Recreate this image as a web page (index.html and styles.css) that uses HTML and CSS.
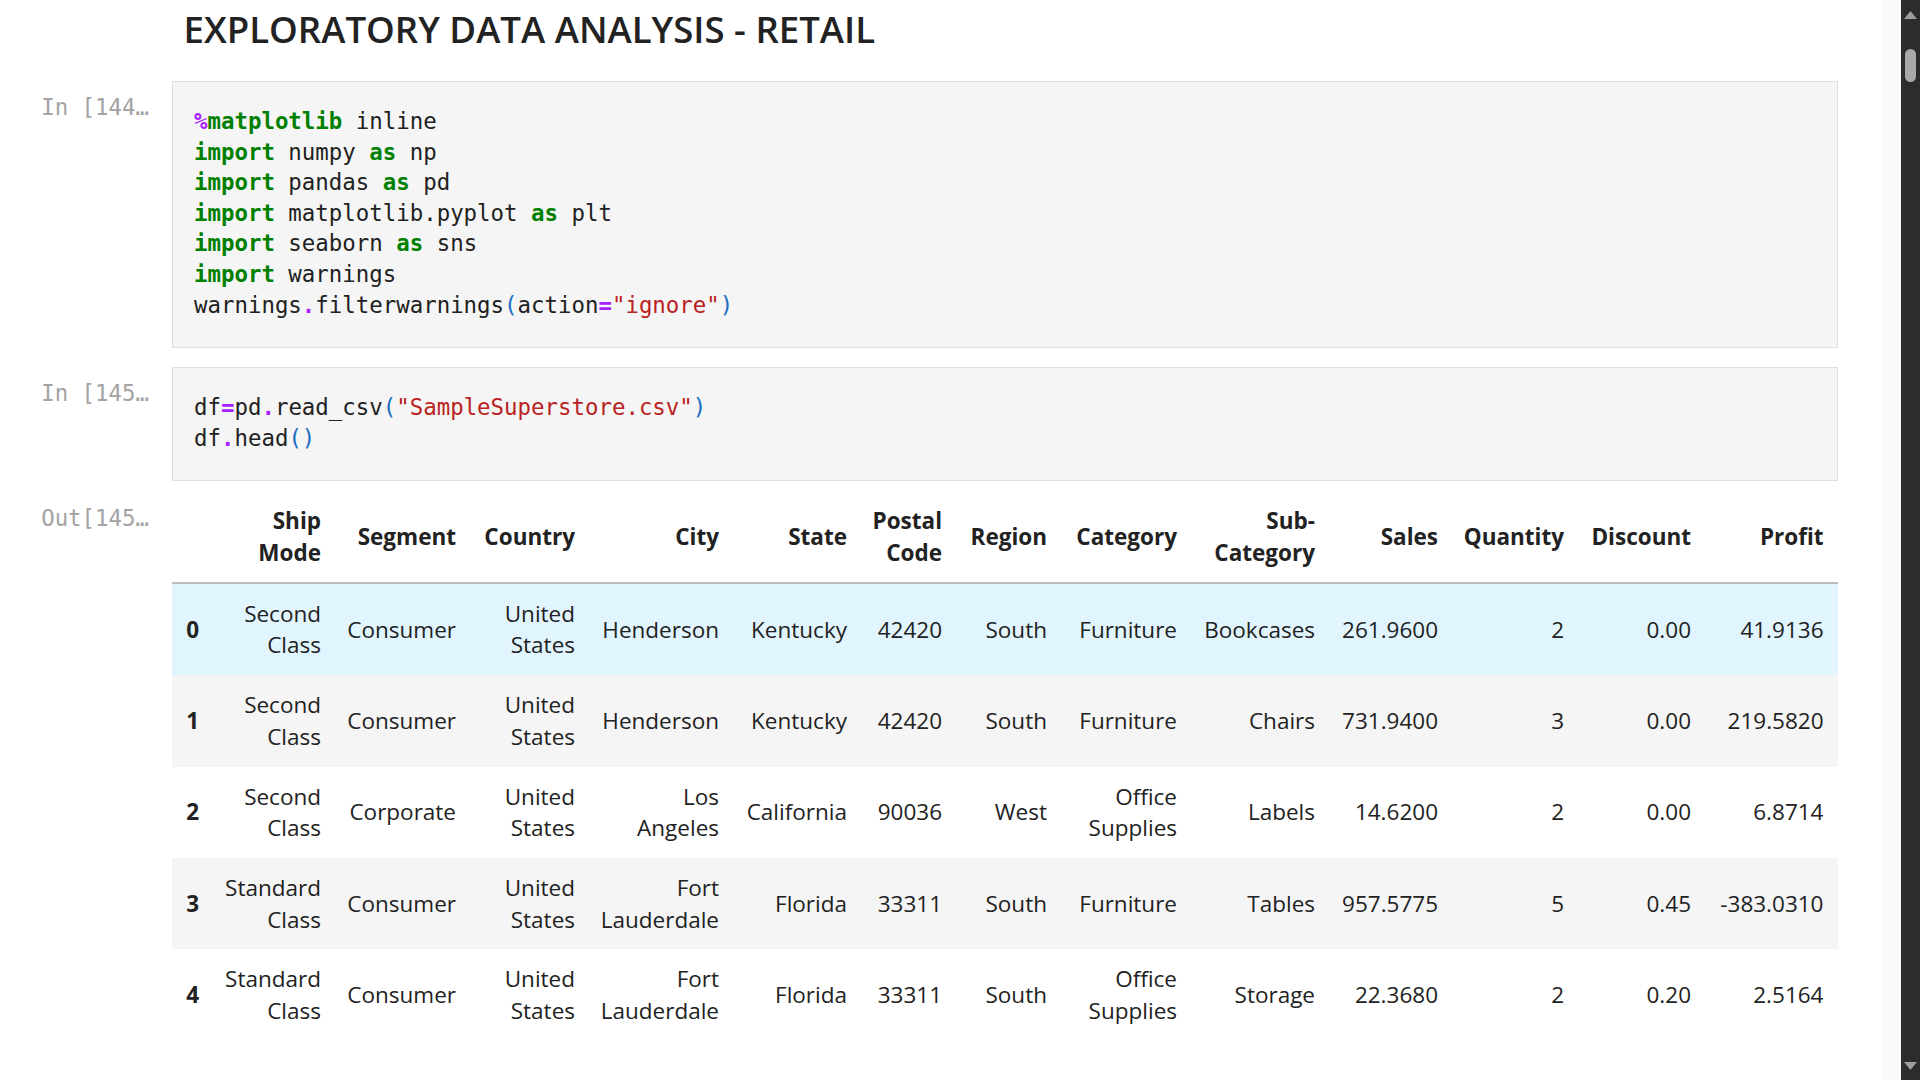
FILE: index.html
```html
<!DOCTYPE html>
<html lang="en">
<head>
<meta charset="utf-8">
<title>EDA - Retail</title>
<link rel="stylesheet" href="styles.css">
</head>
<body>
<div class="app">
  <main class="notebook">
    <section class="cell md-cell">
      <div class="prompt"></div>
      <h1 class="title">EXPLORATORY DATA ANALYSIS - RETAIL</h1>
    </section>

    <section class="cell code-cell first-code">
      <div class="prompt">In [144…</div>
      <pre class="editor"><span class="op">%</span><span class="kw">matplotlib</span> inline
<span class="kw">import</span> numpy <span class="kw">as</span> np
<span class="kw">import</span> pandas <span class="kw">as</span> pd
<span class="kw">import</span> matplotlib.pyplot <span class="kw">as</span> plt
<span class="kw">import</span> seaborn <span class="kw">as</span> sns
<span class="kw">import</span> warnings
warnings<span class="op">.</span>filterwarnings<span class="br">(</span>action<span class="op">=</span><span class="st">"ignore"</span><span class="br">)</span></pre>
    </section>

    <section class="cell code-cell second-code">
      <div class="prompt">In [145…</div>
      <pre class="editor">df<span class="op">=</span>pd<span class="op">.</span>read_csv<span class="br">(</span><span class="st">"SampleSuperstore.csv"</span><span class="br">)</span>
df<span class="op">.</span>head<span class="br">()</span></pre>
    </section>

    <section class="cell output-cell">
      <div class="prompt out-prompt">Out[145…</div>
      <div class="output">
        <table class="dataframe">
          <colgroup>
            <col class="c-idx"><col class="c-ship"><col class="c-seg"><col class="c-country"><col class="c-city"><col class="c-state"><col class="c-postal"><col class="c-region"><col class="c-cat"><col class="c-sub"><col class="c-sales"><col class="c-qty"><col class="c-disc"><col class="c-profit">
          </colgroup>
          <thead>
            <tr>
              <th></th><th>Ship Mode</th><th>Segment</th><th>Country</th><th>City</th><th>State</th><th>Postal Code</th><th>Region</th><th>Category</th><th>Sub-Category</th><th>Sales</th><th>Quantity</th><th>Discount</th><th>Profit</th>
            </tr>
          </thead>
          <tbody>
            <tr class="hover">
              <th>0</th><td>Second Class</td><td>Consumer</td><td>United States</td><td>Henderson</td><td>Kentucky</td><td>42420</td><td>South</td><td>Furniture</td><td>Bookcases</td><td>261.9600</td><td>2</td><td>0.00</td><td>41.9136</td>
            </tr>
            <tr>
              <th>1</th><td>Second Class</td><td>Consumer</td><td>United States</td><td>Henderson</td><td>Kentucky</td><td>42420</td><td>South</td><td>Furniture</td><td>Chairs</td><td>731.9400</td><td>3</td><td>0.00</td><td>219.5820</td>
            </tr>
            <tr>
              <th>2</th><td>Second Class</td><td>Corporate</td><td>United States</td><td>Los Angeles</td><td>California</td><td>90036</td><td>West</td><td>Office Supplies</td><td>Labels</td><td>14.6200</td><td>2</td><td>0.00</td><td>6.8714</td>
            </tr>
            <tr>
              <th>3</th><td>Standard Class</td><td>Consumer</td><td>United States</td><td>Fort Lauderdale</td><td>Florida</td><td>33311</td><td>South</td><td>Furniture</td><td>Tables</td><td>957.5775</td><td>5</td><td>0.45</td><td>-383.0310</td>
            </tr>
            <tr>
              <th>4</th><td>Standard Class</td><td>Consumer</td><td>United States</td><td>Fort Lauderdale</td><td>Florida</td><td>33311</td><td>South</td><td>Office Supplies</td><td>Storage</td><td>22.3680</td><td>2</td><td>0.20</td><td>2.5164</td>
            </tr>
          </tbody>
        </table>
      </div>
    </section>
  </main>

  <div class="scrollbar" aria-hidden="true">
    <svg class="arrow" width="19" height="30" viewBox="0 0 19 30"><polygon points="9.5,11 16,19 3,19"/></svg>
    <div class="thumb"></div>
    <svg class="arrow arrow-down" width="19" height="30" viewBox="0 0 19 30"><polygon points="3,12 16,12 9.5,20"/></svg>
  </div>
</div>
</body>
</html>
```
FILE: styles.css
```css
html, body {
  margin: 0;
  padding: 0;
  height: 100%;
  background: #ffffff;
}

body {
  font-family: "Open Sans", "Noto Sans", "Liberation Sans", sans-serif;
  color: #212121;
  overflow: hidden;
}

.app {
  display: flex;
  height: 100vh;
}

.notebook {
  flex: 1;
  min-width: 0;
  box-shadow: inset -18px 0 0 #fafafa;
}

.cell {
  display: grid;
  grid-template-columns: 172px 1666px;
  align-items: start;
}

.prompt {
  font-family: "DejaVu Sans Mono", "Liberation Mono", monospace;
  font-size: 22.4px;
  line-height: 30.6px;
  color: #a3a3a3;
  text-align: right;
  padding-right: 23px;
  padding-top: 11px;
  white-space: nowrap;
}

.title {
  margin: 0;
  font-size: 36.6px;
  font-weight: 600;
  line-height: 58px;
  color: #222222;
  padding-left: 11.5px;
  letter-spacing: 0;
}

.first-code {
  margin-top: 23px;
}

.second-code {
  margin-top: 19px;
}

.editor {
  margin: 0;
  background: #f5f5f5;
  border: 1px solid #e0e0e0;
  padding: 24px 21px 27px;
  font-family: "DejaVu Sans Mono", "Liberation Mono", monospace;
  font-size: 22.4px;
  line-height: 30.6px;
  color: #212121;
  white-space: pre;
}

.kw {
  color: #008000;
  font-weight: 700;
}

.op {
  color: #aa22ff;
  font-weight: 700;
}

.br {
  color: #1a6dc2;
}

.st {
  color: #ba2121;
}

.output-cell {
  margin-top: 10px;
}

.out-prompt {
  padding-top: 12px;
}

.dataframe {
  width: 100%;
  table-layout: fixed;
  border-collapse: collapse;
  border-spacing: 0;
  font-size: 22.5px;
  line-height: 31.7px;
  color: #222222;
}

.c-idx { width: 40px; }
.c-ship { width: 122px; }
.c-seg { width: 135px; }
.c-country { width: 119px; }
.c-city { width: 144px; }
.c-state { width: 128px; }
.c-postal { width: 95px; }
.c-region { width: 105px; }
.c-cat { width: 130px; }
.c-sub { width: 138px; }
.c-sales { width: 123px; }
.c-qty { width: 126px; }
.c-disc { width: 127px; }
.c-profit { width: 134px; }

.dataframe th,
.dataframe td {
  padding: 14px 13px 14px 11px;
  text-align: right;
  vertical-align: middle;
}

.dataframe thead th {
  font-weight: 700;
  border-bottom: 2px solid #bdbdbd;
  padding-top: 14px;
  padding-bottom: 13px;
}

.dataframe thead th:last-child,
.dataframe tbody td:last-child {
  padding-right: 14.5px;
}

.dataframe tbody th {
  font-weight: 700;
}

.dataframe tbody tr:nth-child(even) {
  background: #f5f5f5;
}

.dataframe tbody tr.hover {
  background: #e1f5fe;
}

.scrollbar {
  width: 19px;
  flex: none;
  background: #2c2c2c;
  display: flex;
  flex-direction: column;
}

.arrow {
  display: block;
  fill: #9d9d9d;
}

.arrow-down {
  margin-top: auto;
}

.thumb {
  width: 11px;
  height: 33px;
  margin: 19px 4px 0;
  border-radius: 6px;
  background: #a9a9a9;
}
```
